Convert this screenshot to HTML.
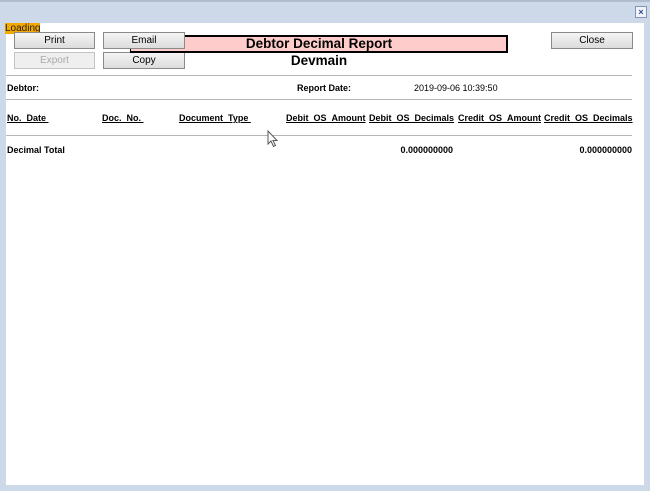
<!DOCTYPE html>
<html><head><style>
body{margin:0;width:650px;height:491px;background:#cdd9e8;position:relative;overflow:hidden;font-family:"Liberation Sans",Arial,sans-serif;}
.win{position:absolute;left:6px;top:23px;width:638px;height:462px;background:#fff;}
.a{position:absolute;white-space:nowrap;}
.btn{position:absolute;height:15px;border:1px solid #8a8a8a;background:linear-gradient(#f4f4f4,#dcdcdc);font-size:10px;text-align:center;line-height:15px;color:#000;}
.dis{color:#aaa;border-color:#c4c4c4;background:#efefef;}
.hr{position:absolute;left:6px;width:626px;height:1px;background:#b5b5b5;}
.b{font-weight:bold;font-size:9px;}
.u{text-decoration:underline;}
</style></head><body>
<div class="a" style="left:0;top:0;width:650px;height:2px;background:#b0bccb"></div>
<div class="a" style="left:635px;top:6px;width:10px;height:10px;border:1px solid #7f95b3;background:#f0f4fa;font-size:9px;line-height:10px;text-align:center;color:#2a4f8a;font-weight:bold">×</div>
<div class="win"></div>
<div class="a" style="left:5px;top:23px;width:35px;height:11px;background:#f5a800;font-size:10px;line-height:11px;color:#222">Loading</div>
<div class="btn" style="left:14px;top:32px;width:79px">Print</div>
<div class="btn dis" style="left:14px;top:52px;width:79px">Export</div>
<div class="btn" style="left:103px;top:52px;width:80px">Copy</div>
<div class="a" style="left:130px;top:35px;width:375px;height:14px;background:#ffcccc;border:2px solid #000;border-left-width:1px;"></div>
<div class="btn" style="left:103px;top:32px;width:80px">Email</div>
<div class="a" style="left:131px;top:35px;width:376px;text-align:center;font-weight:bold;font-size:13.5px;line-height:17px">Debtor Decimal Report</div>
<div class="a" style="left:131px;top:52px;width:376px;text-align:center;font-weight:bold;font-size:13.5px;line-height:17px">Devmain</div>
<div class="btn" style="left:551px;top:32px;width:80px">Close</div>
<div class="hr" style="top:75px"></div>
<div class="a b" style="left:7px;top:83px">Debtor:</div>
<div class="a b" style="left:297px;top:83px">Report Date:</div>
<div class="a" style="left:414px;top:83px;font-size:9px">2019-09-06 10:39:50</div>
<div class="hr" style="top:99px"></div>
<div class="a b u" style="left:7px;top:113px">No.&nbsp;&nbsp;Date&nbsp;</div>
<div class="a b u" style="left:102px;top:113px">Doc.&nbsp;&nbsp;No.&nbsp;</div>
<div class="a b u" style="left:179px;top:113px">Document&nbsp;&nbsp;Type&nbsp;</div>
<div class="a b u" style="left:286px;top:113px">Debit&nbsp;&nbsp;OS&nbsp;&nbsp;Amount</div>
<div class="a b u" style="left:369px;top:113px">Debit&nbsp;&nbsp;OS&nbsp;&nbsp;Decimals</div>
<div class="a b u" style="left:458px;top:113px">Credit&nbsp;&nbsp;OS&nbsp;&nbsp;Amount</div>
<div class="a b u" style="left:544px;top:113px">Credit&nbsp;&nbsp;OS&nbsp;&nbsp;Decimals</div>
<div class="hr" style="top:135px"></div>
<div class="a b" style="left:7px;top:145px">Decimal Total</div>
<div class="a b" style="left:353px;top:145px;width:100px;text-align:right">0.000000000</div>
<div class="a b" style="left:532px;top:145px;width:100px;text-align:right">0.000000000</div>
<svg class="a" style="left:267px;top:130px" width="12" height="18" viewBox="0 0 12 18"><path d="M1 1 L1 14 L4 11 L6.5 16.5 L8.5 15.5 L6 10.5 L10 10.5 Z" fill="#fff" stroke="#555" stroke-width="1"/></svg>
</body></html>
